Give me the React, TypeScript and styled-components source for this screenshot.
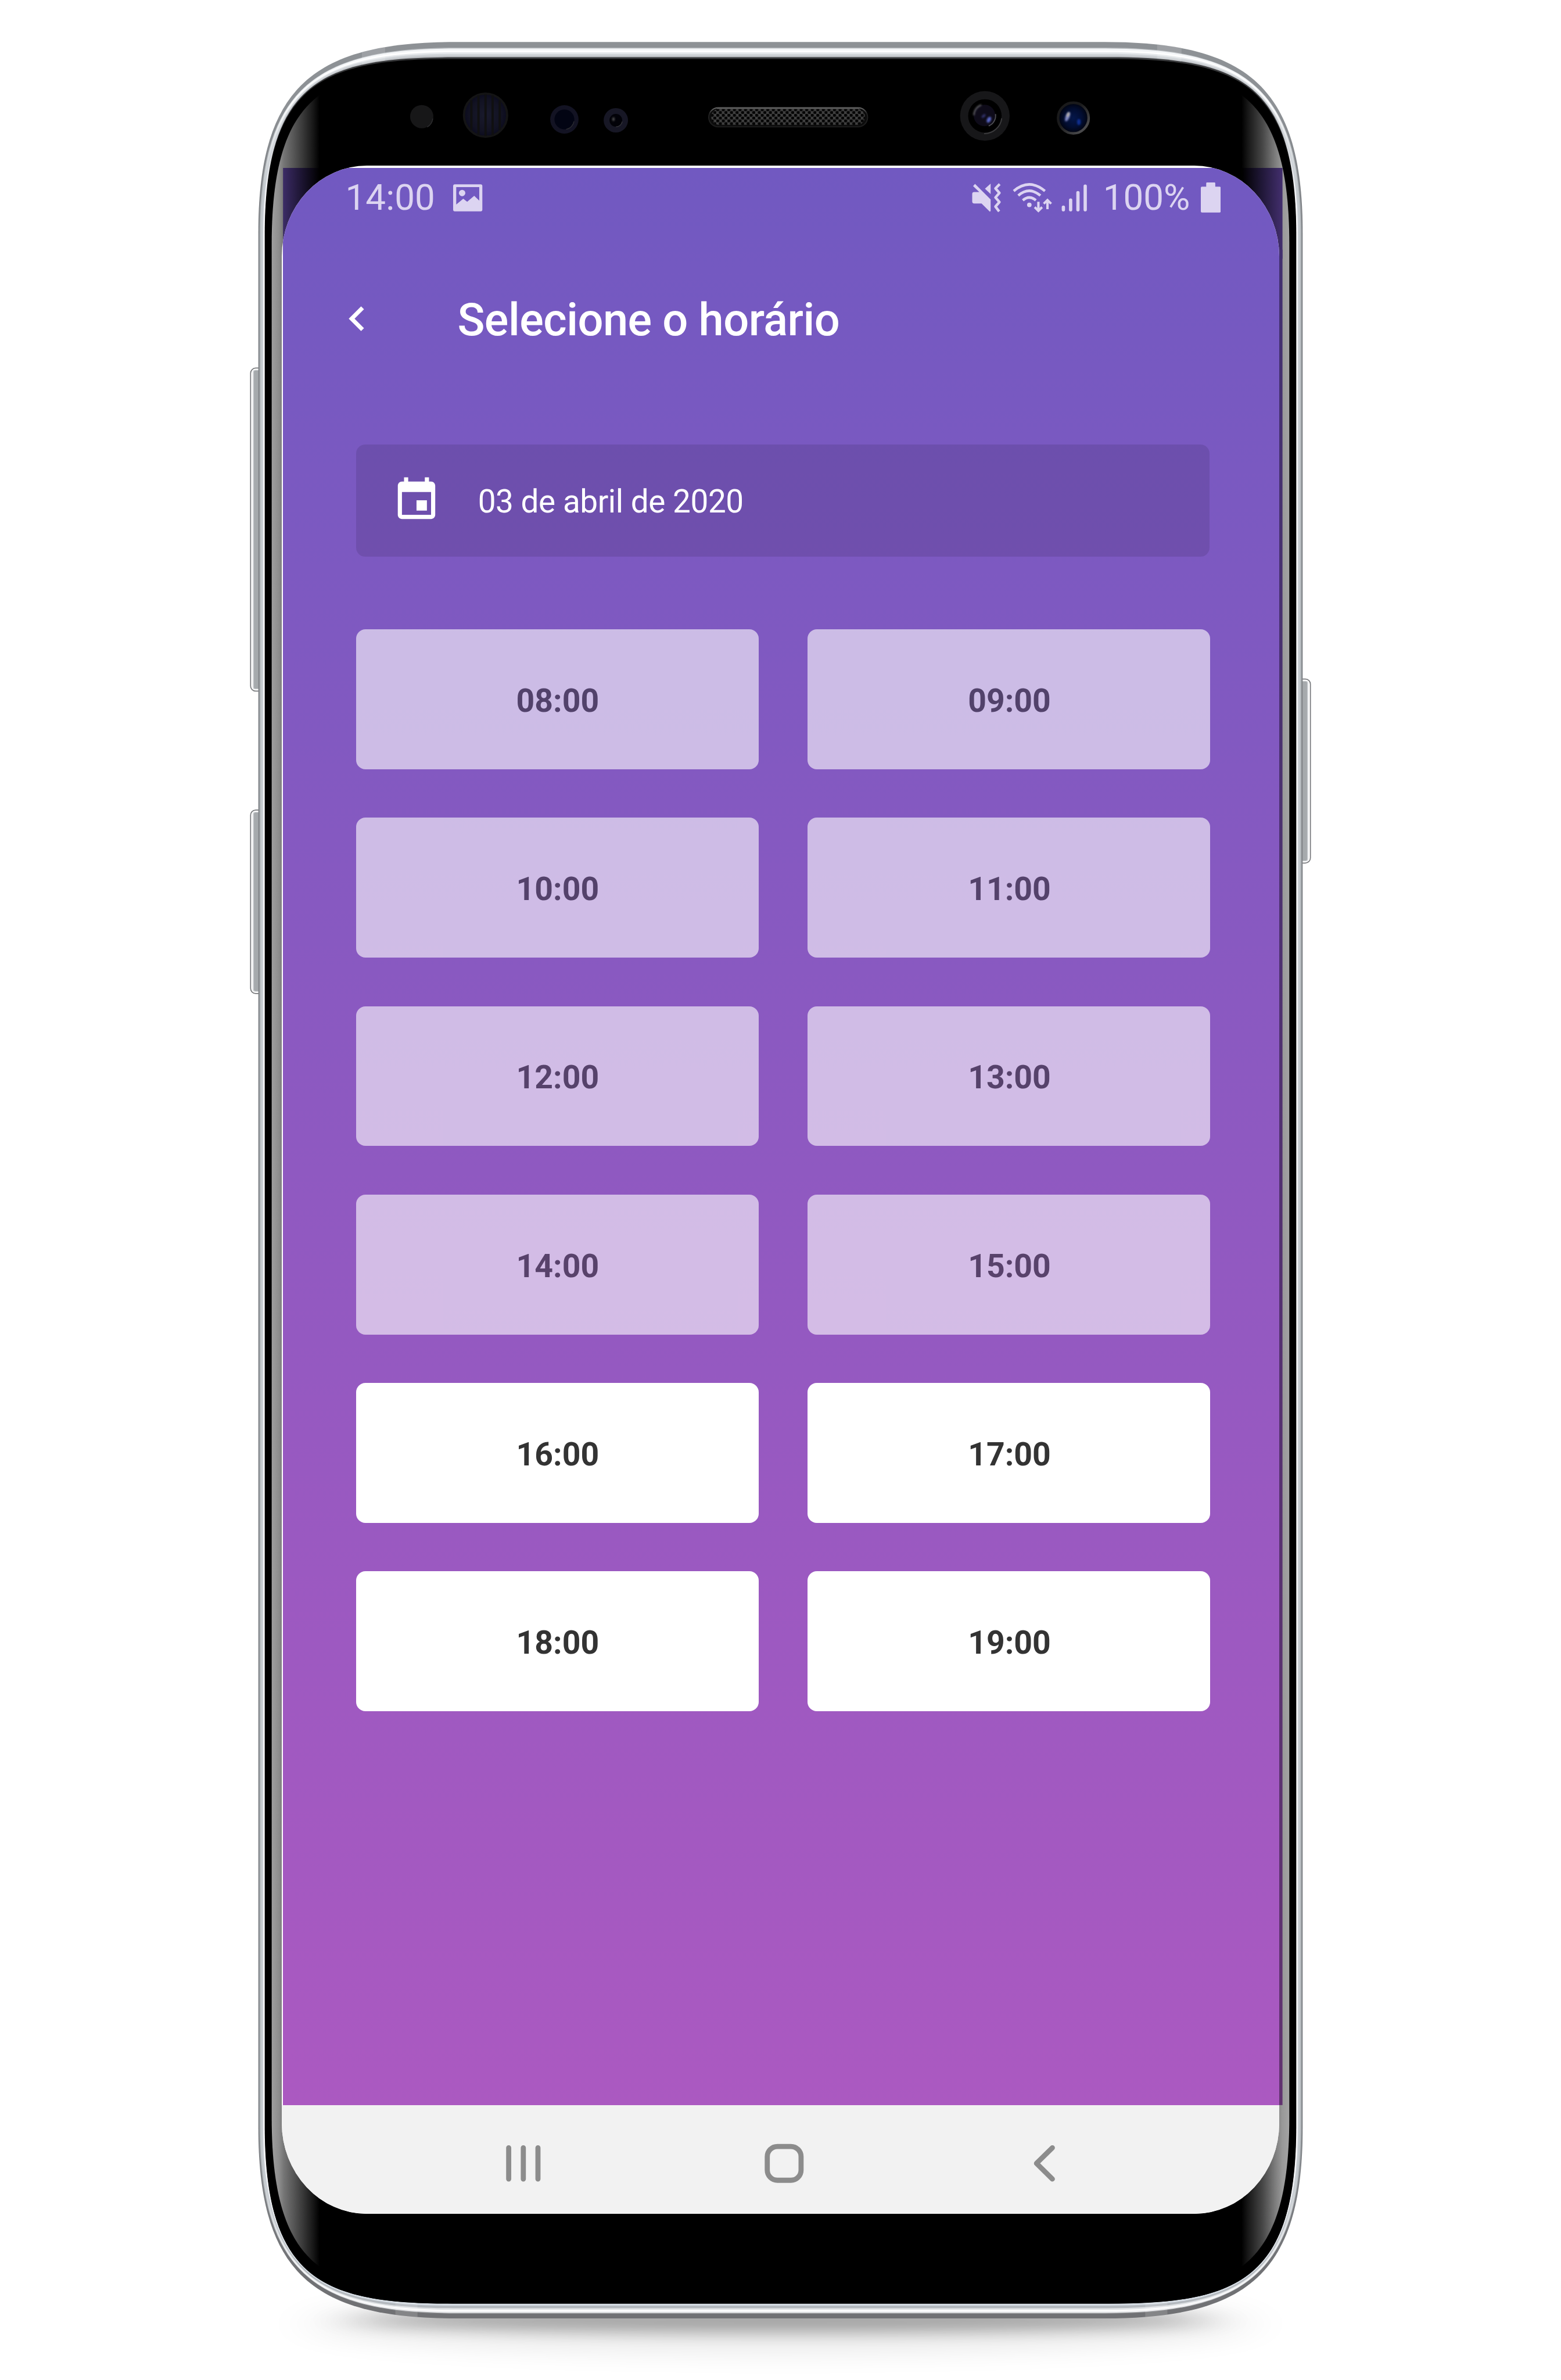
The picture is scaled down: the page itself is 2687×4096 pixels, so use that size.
import React from 'react';
import styled, { createGlobalStyle } from 'styled-components';

/* The board is 27.52rem wide, whatever the window. */
const GlobalStyle = createGlobalStyle`
  html { font-size: calc(100vw / 27.52); }
  body { margin: 0; background: #fff; overflow: hidden; }
  *, *::before, *::after { box-sizing: border-box; }
`;

const Board = styled.main`
  position: relative;
  width: 27.52rem;
  height: 41.95rem;
  padding: 2.92rem 0 0 4.97rem;
  overflow: hidden;
  background: #fff;
  font-family: Roboto, 'Liberation Sans', sans-serif;
`;

const DeviceArt = styled.svg`
  position: absolute;
  inset: 0;
  width: 100%;
  height: 100%;
`;

const Screen = styled.section`
  position: relative;
  display: flex;
  flex-direction: column;
  width: 17.58rem;
  height: 36.105rem;
  padding: 0.04rem 0 0 0.02rem;
  overflow: hidden;
  background: #fff;
  border-radius: 1.5rem / 1.6rem;
`;

const AppView = styled.div`
  display: flex;
  flex-direction: column;
  height: 34.148rem;
  background: linear-gradient(#7159c1, #ab59c1);
`;

const StatusBar = styled.div`
  display: flex;
  align-items: center;
  height: 1.05rem;
  padding: 0 1.03rem 0 1.1rem;
  color: #dcd4f1;
  font-size: 0.634rem;
  line-height: 1;
`;

const StatusText = styled.span<{ $gap: number }>`
  margin-right: ${(p) => p.$gap}rem;
  padding-top: 0.02rem;
  white-space: nowrap;
`;

const Glyph = styled.svg<{ $w: number; $h: number; $gap?: number }>`
  display: block;
  flex: none;
  width: ${(p) => p.$w}rem;
  height: ${(p) => p.$h}rem;
  margin-right: ${(p) => p.$gap ?? 0}rem;
`;

const StatusRight = styled.div`
  display: flex;
  align-items: center;
  margin-left: auto;
`;

const Header = styled.header`
  display: flex;
  align-items: center;
  height: 3.22rem;
  padding-left: 0.865rem;
`;

const Title = styled.h1`
  margin: 0 0 0 1.34rem;
  padding-top: 0.05rem;
  color: #fff;
  font-size: 0.795rem;
  font-weight: 500;
  letter-spacing: -0.0055rem;
  line-height: 1;
  white-space: nowrap;
`;

const Content = styled.div`
  padding: 0.603rem 1.21rem 0 1.284rem;
`;

const DateButton = styled.div`
  display: flex;
  align-items: center;
  width: 15.05rem;
  height: 1.974rem;
  padding-left: 0.627rem;
  border-radius: 0.16rem;
  background: rgba(0, 0, 0, 0.1);
  color: #fff;
  font-size: 0.562rem;
  letter-spacing: -0.0045rem;
  line-height: 1;
`;

const DateLabel = styled.span`
  padding-top: 0.045rem;
  white-space: nowrap;
`;

const SlotGrid = styled.div`
  display: grid;
  grid-template-columns: 7.1rem 7.1rem;
  grid-auto-rows: 2.467rem;
  gap: 0.854rem 0.865rem;
  margin-top: 1.286rem;
`;

const Slot = styled.div<{ $past: boolean }>`
  display: flex;
  align-items: center;
  justify-content: center;
  padding: 0.065rem 0 0 0.015rem;
  border-radius: 0.165rem;
  background: #fff;
  color: #333;
  font-size: 0.567rem;
  font-weight: 700;
  line-height: 1;
  opacity: ${(p) => (p.$past ? 0.6 : 1)};
`;

const NavBar = styled.nav`
  display: flex;
  flex: 1;
  align-items: center;
  gap: 3.59rem;
  margin-left: -0.02rem;
  padding: 0.13rem 0 0 3.76rem;
  background: #f2f2f2;
`;

type LayerTone = [number, number, number, string, string, string];

/* Metal rim, outside in: side inset, top inset, bottom inset, then the top, side and bottom tones. */
const rim: LayerTone[] = [
  [0, 0, 0, '#8d9195', '#7f8286', '#707174'],
  [1.8, 10, 8.5, '#b9bdc1', '#9da2a6', '#a5a7aa'],
  [3.2, 11.5, 10, '#f4f6f8', '#bcc1c5', '#f1f2f4'],
  [4.5, 15, 13, '#ffffff', '#c3c9cd', '#ffffff'],
  [6, 18, 15, '#e6e9ec', '#c3c9ce', '#e1e4e7'],
  [7.5, 21, 18, '#d0d4d8', '#cfd3d8', '#b4b9be'],
  [8.5, 24, 21, '#c2c5c9', '#eef0f4', '#b4bac1'],
  [10, 26, 22.5, '#aeb1b5', '#ffffff', '#d6dde4'],
  [11.3, 27, 26, '#38393b', '#000000', '#000000'],
  [11.8, 30, 26.2, '#000000', '#000000', '#000000'],
];

const mix = (a: number, b: number, t: number) => a + (b - a) * t;

function outline(l: number, t: number, b: number, v: number, c: number, h1: number, h2: number) {
  const r = 2752 - l;
  return [
    `M${l} ${t + v}`,
    `C${l} ${t + c} ${l + h1} ${t} ${l + h2} ${t}`,
    `H${r - h2}`,
    `C${r - h1} ${t} ${r} ${t + c} ${r} ${t + v}`,
    `V${b - v}`,
    `C${r} ${b - c} ${r - h1} ${b} ${r - h2} ${b}`,
    `H${l + h2}`,
    `C${l + h1} ${b} ${l} ${b - c} ${l} ${b - v}Z`,
  ].join('');
}

const rimPath = ([dx, top, bottom]: LayerTone) => {
  const k = dx / 11.8;
  return outline(455.4 + dx, 74 + top, 4086.5 - bottom, mix(336, 313, k), mix(76, 40, k), mix(101, 103, k), mix(350, 330, k));
};

const glassPath = outline(479, 121, 4042, 309, 33, 106, 311);

function SideKey({ x, y, h, flip }: { x: number; y: number; h: number; flip?: boolean }) {
  return (
    <g transform={flip ? `translate(${x} ${y}) scale(-1 1)` : `translate(${x} ${y})`}>
      <rect x="0.8" y="0.8" width="24" height={h - 1.6} rx="9" fill="#fff" stroke="#77797c" strokeWidth="1.8" />
      <rect x="4.5" y="4" width="22" height={h - 8} rx="4" fill="#d4d7da" />
      <rect x="6.5" y="5" width="20" height={h - 10} rx="3" fill="#a6aaad" />
    </g>
  );
}

function Device() {
  return (
    <DeviceArt viewBox="0 0 2752 4195" preserveAspectRatio="none" aria-hidden>
      <defs>
        {rim.map(([, , , top, side, bottom], i) => (
          <linearGradient key={i} id={`rim${i}`} gradientUnits="userSpaceOnUse" x1="0" y1="74" x2="0" y2="4087">
            <stop offset="0" stopColor={top} />
            <stop offset="0.028" stopColor={top} />
            <stop offset="0.065" stopColor={side} />
            <stop offset="0.935" stopColor={side} />
            <stop offset="0.98" stopColor={bottom} />
            <stop offset="1" stopColor={bottom} />
          </linearGradient>
        ))}
        <linearGradient id="gloss" gradientUnits="userSpaceOnUse" x1="479" y1="0" x2="2273" y2="0">
          <stop offset="0" stopColor="#a6a6a6" />
          <stop offset="0.001" stopColor="#9c9c9c" />
          <stop offset="0.007" stopColor="#8e8e8e" />
          <stop offset="0.012" stopColor="#757575" />
          <stop offset="0.026" stopColor="#484848" />
          <stop offset="0.041" stopColor="#161616" />
          <stop offset="0.047" stopColor="#000" />
          <stop offset="0.953" stopColor="#000" />
          <stop offset="0.959" stopColor="#161616" />
          <stop offset="0.974" stopColor="#484848" />
          <stop offset="0.986" stopColor="#7c7c7c" />
          <stop offset="0.993" stopColor="#989898" />
          <stop offset="0.999" stopColor="#a2a2a2" />
          <stop offset="1" stopColor="#aaa" />
        </linearGradient>
        <linearGradient id="tintLeft" x1="0" x2="1" y1="0" y2="0">
          <stop offset="0" stopColor="#3c2c66" />
          <stop offset="0.5" stopColor="#1d1533" />
          <stop offset="1" stopColor="#000" />
        </linearGradient>
        <linearGradient id="tintRight" x1="1" x2="0" y1="0" y2="0">
          <stop offset="0" stopColor="#432f6e" />
          <stop offset="0.5" stopColor="#211839" />
          <stop offset="1" stopColor="#000" />
        </linearGradient>
        <linearGradient id="edge" x1="0" x2="0" y1="0" y2="1">
          <stop offset="0" stopColor="#42306f" />
          <stop offset="1" stopColor="#613270" />
        </linearGradient>
        <pattern id="mesh" patternUnits="userSpaceOnUse" x="1253" y="191" width="9.8" height="9.8">
          <rect width="9.8" height="9.8" fill="#404040" />
          <ellipse cx="2.45" cy="2.45" rx="3" ry="2.6" fill="#050505" />
          <ellipse cx="7.35" cy="7.35" rx="3" ry="2.6" fill="#050505" />
        </pattern>
        <linearGradient id="slit" x1="0" x2="0" y1="0" y2="1">
          <stop offset="0" stopColor="#6a6a6a" />
          <stop offset="0.3" stopColor="#222" />
          <stop offset="1" stopColor="#1c1c1c" />
        </linearGradient>
        <radialGradient id="blueLens">
          <stop offset="0" stopColor="#04164a" />
          <stop offset="0.6" stopColor="#020d30" />
          <stop offset="1" stopColor="#01030d" />
        </radialGradient>
        <linearGradient id="lensRing" x1="0" y1="0" x2="1" y2="1">
          <stop offset="0.4" stopColor="#1a1a1b" />
          <stop offset="0.85" stopColor="#4a4a4c" />
          <stop offset="1" stopColor="#1c1c1d" />
        </linearGradient>
        <radialGradient id="irLens">
          <stop offset="0" stopColor="#191a2c" />
          <stop offset="0.75" stopColor="#121222" />
          <stop offset="1" stopColor="#0b0b1e" />
        </radialGradient>
        <filter id="soft" x="-20%" y="-200%" width="140%" height="500%">
          <feGaussianBlur stdDeviation="46 13" />
        </filter>
        <filter id="softer" x="-20%" y="-200%" width="140%" height="500%">
          <feGaussianBlur stdDeviation="50 24" />
        </filter>
        <filter id="dot" x="-50%" y="-50%" width="200%" height="200%">
          <feGaussianBlur stdDeviation="1.4" />
        </filter>
        <clipPath id="body">
          <path d={rimPath(rim[0])} />
        </clipPath>
      </defs>

      <ellipse cx="1376" cy="4096" rx="830" ry="48" fill="#000" opacity="0.09" filter="url(#softer)" />
      <ellipse cx="1376" cy="4089" rx="755" ry="22" fill="#000" opacity="0.29" filter="url(#soft)" />

      <SideKey x={441} y={648} h={571} />
      <SideKey x={441} y={1427} h={325} />
      <SideKey x={2311} y={1196} h={326} flip />

      {rim.slice(0, 8).map((layer, i) => (
        <path key={i} d={rimPath(layer)} fill={`url(#rim${i})`} />
      ))}
      <g clipPath="url(#body)" fill="#fff" opacity="0.14">
        <path d="M638 74h41v50h-41zM2040 74h43v50h-43zM697 4050h39v40h-39zM2019 4050h39v40h-39z" />
      </g>
      {rim.slice(8).map((layer, i) => (
        <path key={i} d={rimPath(layer)} fill={`url(#rim${i + 8})`} />
      ))}
      <path d={glassPath} fill="url(#gloss)" />

      <rect x="499" y="296" width="64" height="160" fill="url(#tintLeft)" />
      <rect x="2190" y="296" width="71" height="160" fill="url(#tintRight)" />
      <rect x="2254" y="440" width="7" height="3270.5" fill="url(#edge)" />

      <circle cx="743.5" cy="205.5" r="20.5" fill="#171718" />
      <path d="M753 224a20 20 0 0 0 10-15" fill="none" stroke="#2c2c2e" strokeWidth="1.5" />

      <circle cx="856" cy="203" r="38" fill="url(#irLens)" stroke="#141415" strokeWidth="4" />
      <path d="M831 177v52M843.5 168v70M856 166v74M868.5 168v70M881 177v52" stroke="#101011" strokeWidth="4" />

      <circle cx="995" cy="210.5" r="25" fill="#131323" />
      <circle cx="995" cy="210.5" r="17.5" fill="#020413" />
      <path d="M998 228a17.5 17.5 0 0 0 14-14" fill="none" stroke="#2b2b30" strokeWidth="1.5" />

      <circle cx="1085.7" cy="212" r="21.5" fill="#171725" />
      <circle cx="1085.7" cy="212" r="11.2" fill="#020208" />
      <path d="M1086 223.5a11.2 11.2 0 0 0 11-9" fill="none" stroke="#35353a" strokeWidth="1.5" />
      <ellipse cx="1081.5" cy="210" rx="2" ry="3.2" fill="#555" filter="url(#dot)" />

      <rect x="1249.500" y="190" width="280" height="33.500" rx="16.700" fill="#0c0c0c" stroke="url(#slit)" strokeWidth="2" />
      <rect x="1254" y="192" width="271" height="28" rx="14" fill="url(#mesh)" />
      <path d="M1264 190.800H1515" stroke="#5c5c5c" strokeWidth="2.400" />

      <circle cx="1736.300" cy="204.300" r="43.700" fill="#171719" />
      <circle cx="1736.300" cy="204.300" r="29.500" fill="#000" />
      <path d="M1735 235.500a31 31 0 0 0 31-27" fill="none" stroke="#3b3b3d" strokeWidth="2" />
      <circle cx="1735.500" cy="203.500" r="19" fill="#0e0b19" />
      <path d="M1717 203a19 19 0 0 1 13-18" fill="none" stroke="#66666a" strokeWidth="2.400" filter="url(#dot)" />
      <path d="M1743 222a19.500 19.500 0 0 0 12-21" fill="none" stroke="#4c4c52" strokeWidth="2" />
      <ellipse cx="1743.500" cy="211" rx="3.400" ry="5.600" fill="#5a68c8" transform="rotate(28 1743.500 211)" filter="url(#dot)" />
      <ellipse cx="1734" cy="204.500" rx="2.200" ry="4.200" fill="#30306a" transform="rotate(48 1734 204.500)" filter="url(#dot)" />

      <circle cx="1892.300" cy="208" r="27" fill="url(#blueLens)" stroke="url(#lensRing)" strokeWidth="4.500" />
      <ellipse cx="1882" cy="206" rx="3.400" ry="8.500" fill="#7f87c4" transform="rotate(22 1882 206)" filter="url(#dot)" />
      <ellipse cx="1883" cy="202" rx="2" ry="4.500" fill="#b9b3a6" transform="rotate(22 1883 202)" filter="url(#dot)" />
      <ellipse cx="1902" cy="215" rx="3.200" ry="5.500" fill="#0f2f92" filter="url(#dot)" />
    </DeviceArt>
  );
}

const PictureIcon = () => (
  <Glyph $w={0.515} $h={0.48} viewBox="0 0 52 48" fill="currentColor">
    <path fillRule="evenodd" d="M3 0H49a3 3 0 0 1 3 3V45a3 3 0 0 1-3 3H3a3 3 0 0 1-3-3V3a3 3 0 0 1 3-3ZM5.500 5V36L18 25.500L25 31L37.500 20.500L46.500 29V5Z" />
    <circle cx="16" cy="15.500" r="5.700" />
  </Glyph>
);

const MuteIcon = () => (
  <Glyph $w={0.52} $h={0.52} $gap={0.19} viewBox="0 0 52 52" fill="currentColor">
    <path d="M5.500 1.500L33 29V49.500L31.500 50.500L17 36H4a3.500 3.500 0 0 1-3.500-3.500V19.500A3.500 3.500 0 0 1 4 16H13L2 5.500Z" />
    <path d="M33 1V19.500L23 10Z" />
    <path d="M49 2L41.500 9.500L48.500 17.500L41.500 25.500L48.500 33.500L41.500 41.500L48 50" fill="none" stroke="currentColor" strokeWidth="4.600" strokeLinejoin="round" />
  </Glyph>
);

const WifiIcon = () => (
  <Glyph $w={0.7} $h={0.52} $gap={0.17} viewBox="0 0 70 52" fill="none" stroke="currentColor" strokeWidth="4.600">
    <path d="M2 14Q29.500 -9 57 14" />
    <path d="M10 22Q29.500 5.500 49 22" />
    <path d="M18 30.500Q29.500 20.500 41 30.500" />
    <circle cx="29.500" cy="38.500" r="4" fill="currentColor" stroke="none" />
    <path d="M45.500 33V49M39 42.500L45.500 49L52 42.500M61.500 46V30M55 36.500L61.500 30L68 36.500" strokeWidth="4.200" />
  </Glyph>
);

const SignalIcon = () => (
  <Glyph $w={0.46} $h={0.5} $gap={0.27} viewBox="0 0 46 50" stroke="currentColor" strokeWidth="5.800" strokeLinecap="round">
    <path d="M3.500 41.500V46M16.300 29V46M29.200 16V46M42 4.500V46" />
  </Glyph>
);

const BatteryIcon = () => (
  <Glyph $w={0.35} $h={0.53} viewBox="0 0 35 53" fill="currentColor">
    <path d="M11 0H24a1.500 1.500 0 0 1 1.500 1.500V7.500H33a2 2 0 0 1 2 2V51a2 2 0 0 1-2 2H2a2 2 0 0 1-2-2V9.500a2 2 0 0 1 2-2H9.500V1.500A1.500 1.500 0 0 1 11 0Z" />
  </Glyph>
);

const BackIcon = () => (
  <Glyph $w={0.87} $h={0.87} viewBox="0 0 24 24" fill="#fff">
    <path d="M15.410 7.410L14 6l-6 6 6 6 1.410-1.410L10.830 12z" />
  </Glyph>
);

const EventIcon = () => (
  <Glyph $w={0.88} $h={0.88} $gap={0.645} viewBox="0 0 24 24" fill="#fff">
    <path d="M17 12h-5v5h5v-5zM16 1v2H8V1H6v2H5c-1.110 0-1.990.9-1.990 2L3 19c0 1.100.890 2 2 2h14c1.100 0 2-.9 2-2V5c0-1.100-.9-2-2-2h-1V1h-2zm3 18H5V8h14v11z" />
  </Glyph>
);

const navStroke = { fill: 'none', stroke: '#8c8c8c', strokeWidth: 9, strokeLinecap: 'round', strokeLinejoin: 'round' } as const;

const slots = Array.from({ length: 12 }, (_, i) => i + 8);
const firstFree = 16;

export default function App() {
  return (
    <>
      <GlobalStyle />
      <Board>
        <Device />
        <Screen>
          <AppView>
            <StatusBar>
              <StatusText $gap={0.325}>14:00</StatusText>
              <PictureIcon />
              <StatusRight>
                <MuteIcon />
                <WifiIcon />
                <SignalIcon />
                <StatusText $gap={0.19}>100%</StatusText>
                <BatteryIcon />
              </StatusRight>
            </StatusBar>
            <Header>
              <BackIcon />
              <Title>Selecione o horário</Title>
            </Header>
            <Content>
              <DateButton>
                <EventIcon />
                <DateLabel>03 de abril de 2020</DateLabel>
              </DateButton>
              <SlotGrid>
                {slots.map((hour) => (
                  <Slot key={hour} $past={hour < firstFree}>
                    {`${String(hour).padStart(2, '0')}:00`}
                  </Slot>
                ))}
              </SlotGrid>
            </Content>
          </AppView>
          <NavBar>
            <Glyph $w={1} $h={0.7} viewBox="0 0 100 70" {...navStroke}>
              <path d="M24.200 7.500V62.500M50 7.500V62.500M75.800 7.500V62.500" />
            </Glyph>
            <Glyph $w={1} $h={0.7} viewBox="0 0 100 70" {...navStroke}>
              <rect x="20.200" y="5.200" width="59.600" height="59.600" rx="18" />
            </Glyph>
            <Glyph $w={1} $h={0.7} viewBox="0 0 100 70" {...navStroke}>
              <path d="M64 7.500L36 35L64 62.500" />
            </Glyph>
          </NavBar>
        </Screen>
      </Board>
    </>
  );
}
